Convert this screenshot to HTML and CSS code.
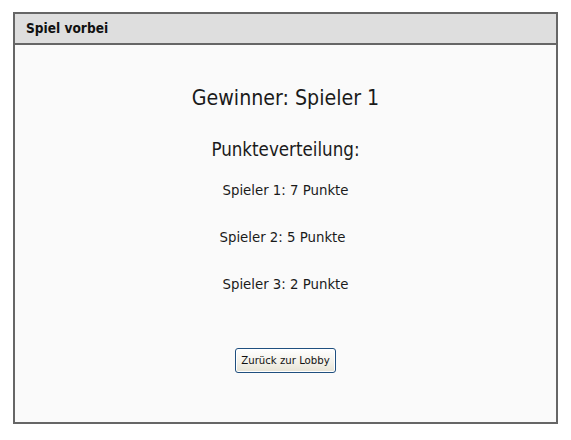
FILE: index.html
```html
<!DOCTYPE html>
<html lang="de">
<head>
<meta charset="utf-8">
<link rel="stylesheet" href="styles.css">
</head>
<body>
<div class="frame">
  <div class="titlebar">Spiel vorbei</div>
  <div class="content">
    <div class="winner">Gewinner: Spieler 1</div>
    <div class="subtitle">Punkteverteilung:</div>
    <div class="scores">
      <div class="score">Spieler 1: 7 Punkte</div>
      <div class="score score-shift">Spieler 2: 5 Punkte</div>
      <div class="score">Spieler 3: 2 Punkte</div>
    </div>
    <button class="btn">Zurück zur Lobby</button>
  </div>
</div>
</body>
</html>
```
FILE: styles.css
```css
html, body {
  margin: 0;
  padding: 0;
  background: #ffffff;
}
body {
  font-family: "DejaVu Sans Condensed", "DejaVu Sans", sans-serif;
  font-stretch: condensed;
  color: #1a1a1a;
}
.frame {
  margin: 12px 0 0 13px;
  width: 541px;
  height: 408px;
  border: 2px solid #666666;
  background: #fafafa;
  display: flex;
  flex-direction: column;
}
.titlebar {
  height: 29px;
  line-height: 29px;
  background: #dedede;
  border-bottom: 2px solid #666666;
  padding-left: 11px;
  font-weight: bold;
  font-size: 13.6px;
  color: #111;
}
.content {
  flex: 1;
  display: flex;
  flex-direction: column;
  align-items: center;
  padding-top: 41px;
}
.winner {
  font-size: 21.2px;
  line-height: 24px;
}
.subtitle {
  font-size: 18.6px;
  line-height: 22px;
  margin-top: 29px;
}
.scores {
  margin-top: 20px;
  display: flex;
  flex-direction: column;
  align-items: center;
  gap: 30px;
}
.score {
  font-size: 14.8px;
  line-height: 17px;
}
.score-shift {
  margin-right: 6px;
}
.btn {
  margin-top: 56px;
  width: 101px;
  height: 25px;
  padding: 0;
  font-family: inherit;
  font-stretch: condensed;
  font-size: 11.3px;
  color: #111;
  border: 1px solid #1f4f7f;
  border-radius: 3px;
  background: linear-gradient(#ffffff, #f2f0e8 60%, #e6e2d4);
  box-shadow: inset 0 0 0 1px #ffffff;
}
```
